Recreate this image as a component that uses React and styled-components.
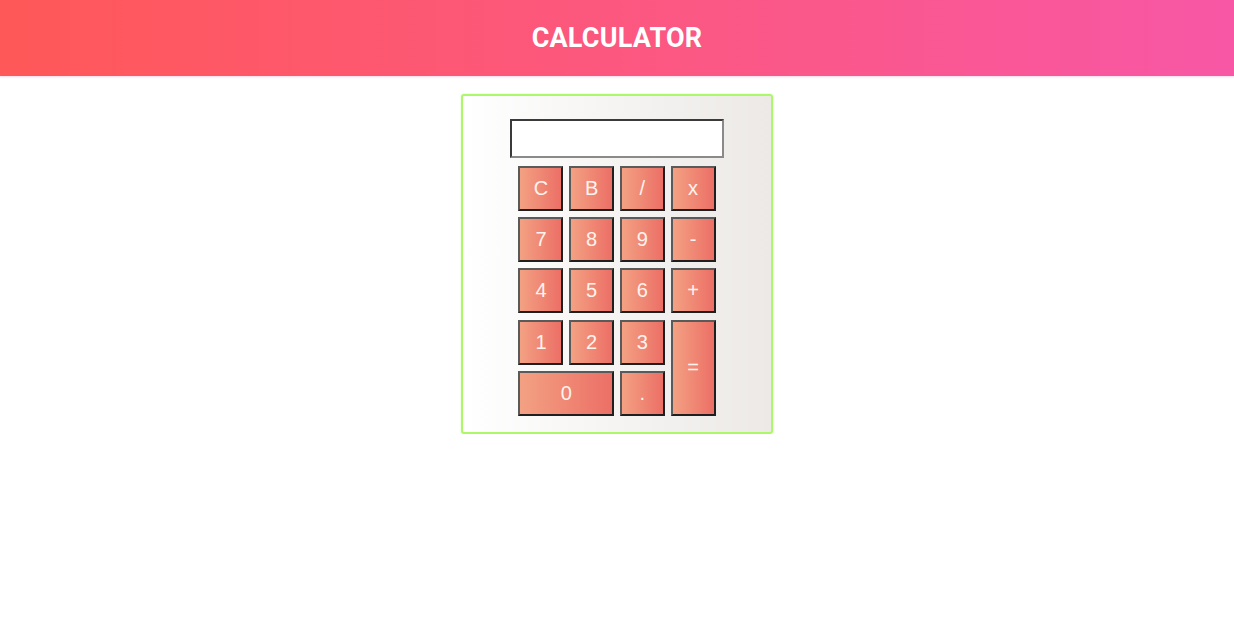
import React, { useState } from "react";
import styled, { createGlobalStyle } from "styled-components";

const GlobalStyle = createGlobalStyle`
  body {
    margin: 0;
    background: #fff;
    font-family: "Liberation Sans", Arial, sans-serif;
  }
`;

const Header = styled.header`
  height: 76px;
  display: flex;
  align-items: center;
  justify-content: center;
  background: linear-gradient(to right, #ff5858, #f857a6);
  box-shadow: 0 1px 2px rgba(248, 87, 166, 0.25);
`;

const Title = styled.h1`
  margin: 0;
  color: #fff;
  font-family: Roboto, "DejaVu Sans", sans-serif;
  font-weight: 700;
  font-size: 27px;
  letter-spacing: 0.2px;
`;

const Main = styled.main`
  display: flex;
  justify-content: center;
  padding-top: 18px;
`;

const Card = styled.section`
  box-sizing: border-box;
  width: 312px;
  height: 340px;
  padding: 23px 0 0;
  border: 2px solid #adf76a;
  border-radius: 3px;
  box-shadow: 0 0 2px rgba(173, 247, 106, 0.6);
  background: linear-gradient(to right, #ffffff, #ece9e6);
  display: flex;
  flex-direction: column;
  align-items: center;
`;

const Display = styled.input`
  box-sizing: border-box;
  width: 214px;
  height: 39px;
  margin: 0 0 8px;
  padding: 0 8px;
  border: 2px solid;
  border-color: #3a3a3a #8a8a8a #8a8a8a #3a3a3a;
  background: #fff;
  font-family: "Liberation Sans", Arial, sans-serif;
  font-size: 20px;
  text-align: right;
  outline: none;
`;

const Keys = styled.div`
  display: grid;
  grid-template-columns: repeat(4, 45px);
  grid-auto-rows: 45px;
  column-gap: 5.7px;
  row-gap: 6.2px;
`;

const Key = styled.button`
  box-sizing: border-box;
  grid-column: span ${(p) => p.$cols || 1};
  grid-row: span ${(p) => p.$rows || 1};
  border: 2px solid;
  border-color: #5a5a5a #1f1f1f #1f1f1f #5a5a5a;
  background: linear-gradient(to right, #f3a183, #ec6f66);
  color: #fff3ee;
  font-family: "Liberation Sans", Arial, sans-serif;
  font-size: 20px;
  padding: 0;
  cursor: pointer;
`;

const keys = [
  { k: "C" }, { k: "B" }, { k: "/" }, { k: "x" },
  { k: "7" }, { k: "8" }, { k: "9" }, { k: "-" },
  { k: "4" }, { k: "5" }, { k: "6" }, { k: "+" },
  { k: "1" }, { k: "2" }, { k: "3" }, { k: "=", rows: 2 },
  { k: "0", cols: 2 }, { k: "." },
];

export default function App() {
  const [value, setValue] = useState("");

  const press = (k) => {
    if (k === "C") return setValue("");
    if (k === "B") return setValue((v) => v.slice(0, -1));
    if (k === "=") {
      try {
        // eslint-disable-next-line no-new-func
        const r = Function(`return (${value.replace(/x/g, "*")})`)();
        setValue(String(r));
      } catch (e) {
        setValue("Error");
      }
      return;
    }
    setValue((v) => v + k);
  };

  return (
    <>
      <GlobalStyle />
      <Header>
        <Title>CALCULATOR</Title>
      </Header>
      <Main>
        <Card>
          <Display value={value} readOnly />
          <Keys>
            {keys.map(({ k, cols, rows }) => (
              <Key key={k} $cols={cols} $rows={rows} onClick={() => press(k)}>
                {k}
              </Key>
            ))}
          </Keys>
        </Card>
      </Main>
    </>
  );
}
